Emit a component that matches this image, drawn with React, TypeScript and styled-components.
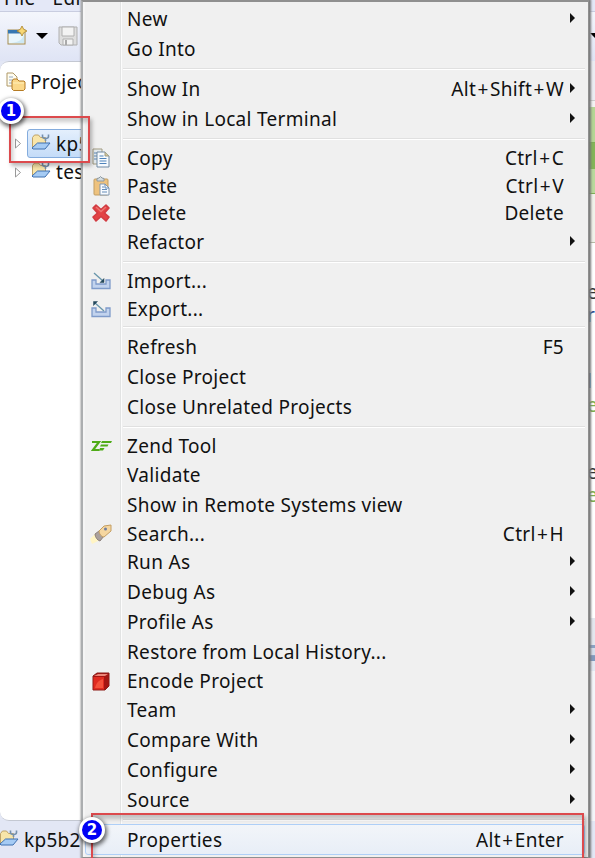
import React from "react";
import styled, { createGlobalStyle } from "styled-components";

const Global = createGlobalStyle`
  * { box-sizing: border-box; }
  html, body { margin: 0; padding: 0; }
  body { font-family: "Noto Sans", "Open Sans", sans-serif; font-size: 19px; letter-spacing: 0.3px; color: #111; overflow: hidden; }
`;

const Screen = styled.div`
  position: relative;
  width: 595px;
  height: 858px;
  overflow: hidden;
  background: #e3e7f5;
  display: flex;
  flex-direction: column;
`;

const MenuBar = styled.div`
  height: 12px;
  border-bottom: 1px solid #c9cde0;
  background: #e4e8f7;
  display: flex;
  align-items: flex-end;
  gap: 17px;
  padding-left: 4px;
  line-height: 26px;
  flex: none;
  overflow: hidden;
`;

const Toolbar = styled.div`
  height: 49px;
  flex: none;
  display: flex;
  align-items: center;
  padding: 0 0 2px 7px;
  background: linear-gradient(#f4f6fc, #dfe4f5);
`;

const Caret = styled.span`
  border: 6px solid transparent;
  border-top-color: #000;
  border-bottom: 0;
  margin: 0 10px 0 9px;
`;

const EndCaret = styled(Caret)`
  margin: 0 -7px 0 auto;
`;

const Body = styled.div`
  display: flex;
  justify-content: space-between;
  height: 760px;
  flex: none;
`;

const Explorer = styled.div`
  width: 300px;
  background: #fff;
  border: 1px solid #c4c8d2;
  border-radius: 9px;
  border-left: 0;
`;

const Tab = styled.div`
  display: flex;
  align-items: center;
  height: 39px;
  gap: 4px;
  padding-left: 6px;
  margin-bottom: 28px;
  white-space: nowrap;
`;

const TreeRow = styled.div<{ $selected?: boolean }>`
  display: flex;
  align-items: center;
  height: 29px;
  padding-left: 14px;
  svg {
    flex: none;
  }
`;

const TreeLabel = styled.span<{ $selected?: boolean }>`
  display: flex;
  align-items: center;
  gap: 5px;
  height: 29px;
  width: 120px;
  margin-left: 5px;
  padding-left: 3px;
  padding-bottom: ${(p) => (p.$selected ? 0 : 2)}px;
  border: 1px solid ${(p) => (p.$selected ? "#84acdd" : "transparent")};
  border-radius: 3px;
  background: ${(p) => (p.$selected ? "linear-gradient(#e4effc, #c4dcf8)" : "none")};
  svg {
    margin-top: -4px;
  }
`;

const Editor = styled.div`
  width: 8px;
  display: flex;
  flex-direction: column;
  background: #fff;
  overflow: hidden;
`;

const Band = styled.div<{ $h: number; $bg: string; $line?: string }>`
  height: ${(p) => p.$h}px;
  flex: none;
  background: ${(p) => p.$bg};
  border-bottom: ${(p) => (p.$line ? `1px solid ${p.$line}` : "0")};
`;

const Code = styled.div<{ $h: number; $c: string }>`
  height: ${(p) => p.$h}px;
  flex: none;
  line-height: 23px;
  color: ${(p) => p.$c};
`;

const Status = styled.div`
  display: flex;
  align-items: center;
  height: 37px;
  flex: none;
  gap: 5px;
  margin-left: -1px;
  svg {
    margin-top: -4px;
  }
`;

const Menu = styled.div`
  position: absolute;
  left: 81px;
  top: 0;
  width: 508px;
  height: 858px;
  padding: 1px 2px 0 1px;
  border: 1px solid #8f8f8f;
  border-top-width: 2px;
  border-left: 2px solid #acaeb0;
  box-shadow: 1px 0 2px 1px #777;
  background: linear-gradient(90deg, #f5f5f5 2px, #f0f0f0 2px, #f0f0f0 37px, #e2e3e3 37px, #e2e3e3 38px, #fcfcfc 38px, #fcfcfc 39px, #f0f0f0 39px);
`;

const Item = styled.div<{ $h: number; $hot?: boolean }>`
  height: ${(p) => p.$h}px;
  display: grid;
  grid-template-columns: 37px 1fr auto ${(p) => (p.$hot ? 20 : 22)}px;
  align-items: center;
  border: ${(p) => (p.$hot ? "1px solid #aecff7" : "0 solid")};
  border-radius: 3px;
  background: ${(p) => (p.$hot ? "linear-gradient(#f2f5f9, #e8eef7)" : "none")};
  margin: 0 ${(p) => (p.$hot ? "1px" : "0")};
  padding-left: ${(p) => (p.$hot ? "0" : "2px")};
`;

const IconCell = styled.span`
  display: flex;
  width: 30px;
  justify-content: center;
`;

const Label = styled.span`
  padding-left: 4px;
  white-space: nowrap;
  line-height: 24px;
`;

const Plus = styled.span`
  padding: 0 1.4px;
`;

const Arrow = styled.span`
  border: 5px solid transparent;
  border-left: 5px solid #111;
  border-right: 0;
  width: 0;
  margin: -2px 0 0 6px;
`;

const Sep = styled.div<{ $h: number }>`
  height: ${(p) => p.$h}px;
  padding: 4px 1px 0 39px;
  &::before {
    content: "";
    display: block;
    height: 2px;
    background: linear-gradient(#e0e0e0 50%, #fff 50%);
  }
`;

const Frame = styled.div<{ $x: number; $y: number; $w: number; $h: number }>`
  position: absolute;
  left: ${(p) => p.$x}px;
  top: ${(p) => p.$y}px;
  width: ${(p) => p.$w}px;
  height: ${(p) => p.$h}px;
  border: 2px solid #dc4a4d;
  box-shadow: 2px 3px 4px rgba(0, 0, 0, 0.28), inset 2px 4px 4px rgba(0, 0, 0, 0.2);
`;

const Badge = styled.div<{ $x: number; $y: number }>`
  position: absolute;
  left: ${(p) => p.$x}px;
  top: ${(p) => p.$y}px;
  width: 26px;
  height: 26px;
  border: 3px solid #fff;
  border-radius: 50%;
  background: #0000f5;
  color: #fff;
  font: bold 15px/20px "DejaVu Sans", sans-serif;
  letter-spacing: 0;
  text-align: center;
  box-shadow: 1px 2px 4px 1px rgba(0, 0, 0, 0.6);
`;

const FolderIcon = () => (
  <svg width="20" height="18" viewBox="0 0 20 18">
    <path d="M1.500 14V4.500L3.500 2h4l2 2.500h5V10" fill="#f8e5a9" stroke="#bfa368" />
    <path d="M14.500 8V5.500M11.500 1.500v2q0 2 3 2t3-2v-2" fill="none" stroke="#7590ad" strokeWidth="1.600" />
    <path d="M1 15l5.500-5H19l-5 6H2z" fill="#a5cbf4" stroke="#3f70b0" strokeLinejoin="round" />
  </svg>
);

const NewIcon = () => (
  <svg width="20" height="20" viewBox="0 0 20 20">
    <rect x="1" y="4" width="17" height="14" fill="#e9f6fc" stroke="#a58b4e" />
    <path d="M1 4h13v3.500H1z" fill="#3577b2" />
    <path d="M2 17C9 17 15 15 17 9v8z" fill="#cde8f4" />
    <path d="M15 0l1.700 3.300L20 5l-3.300 1.700L15 10l-1.700-3.300L10 5l3.300-1.700z" fill="#f9d875" stroke="#a98129" strokeWidth=".8" />
  </svg>
);

const SaveIcon = () => (
  <svg width="20" height="20" viewBox="0 0 20 20">
    <path d="M1 1h18v18H3l-2-2z" fill="#dedede" stroke="#b0b0b0" />
    <path d="M4 1h12v9H4zM5 13h10v6H5z" fill="#f3f3f3" stroke="#b0b0b0" />
    <path d="M7 14h2v5H7z" fill="#aaa" />
  </svg>
);

const ExplorerIcon = () => (
  <svg width="20" height="20" viewBox="0 0 20 20">
    <path d="M1 1h6l4 4v9H1z" fill="#fffdf1" stroke="#af9866" />
    <path d="M3 5h4M3 8h5M3 11h3" stroke="#93a8c3" />
    <path d="M6 17V9l1.500-2H11l2 2h5l1 1v7l-1.500 1.500h-10z" fill="#fbd88a" stroke="#b57b24" />
    <path d="M7 11h11" stroke="#fff0ba" />
  </svg>
);

const TreeArrow = () => (
  <svg width="8" height="11" viewBox="0 0 8 11">
    <path d="M1.500 1v9L6.500 5.500z" fill="#fff" stroke="#999" />
  </svg>
);

const CopyIcon = () => (
  <svg width="20" height="20" viewBox="0 0 20 20">
    <path d="M2 1h9v15H2z" fill="#e5ebef" stroke="#a29b80" />
    <path d="M3 5h3M3 8h3M3 11h3" stroke="#5d88b8" />
    <path d="M6 4h8l4 4v11H6z" fill="#f6fafe" stroke="#718aa3" />
    <path d="M14 4v4h4" fill="#d9c893" stroke="#9c9b88" />
    <path d="M8.500 8h4M8.500 10.500h7M8.500 13h7M8.500 15.500h7" stroke="#4f83ba" />
  </svg>
);

const PasteIcon = () => (
  <svg width="20" height="20" viewBox="0 0 20 20">
    <rect x="3" y="3" width="14" height="16" rx="1" fill="#eec27e" stroke="#c19d62" />
    <path d="M6 5V2.500l2-.5 1.500-1.500L11 2l2 .5V5z" fill="#d4dce0" stroke="#8c98a0" />
    <path d="M9 8h5l4 4v7H9z" fill="#f8fbff" stroke="#8298b0" />
    <path d="M14 8v4h4M11 11h2M11 13.500h5M11 16h5" fill="none" stroke="#648cb8" />
  </svg>
);

const DeleteIcon = () => (
  <svg width="20" height="20" viewBox="0 0 20 20">
    <path d="M5 2l5 4.500L15 2l3 3-4.500 5 4.500 4-3 4-5-4.500L5 18l-3-4 4.500-4L2 5z" fill="#e34345" stroke="#d23c42" strokeWidth="1.600" strokeLinejoin="round" />
    <path d="M5 4l5 4.500L15 4" fill="none" stroke="#ee7672" strokeWidth="1.500" />
  </svg>
);

const TrayIcon = ({ out }: { out?: boolean }) => (
  <svg width="20" height="18" viewBox="0 0 20 18">
    <path d="M1 8h4v4h10V8h4v8.500H1z" fill="#c2d3ee" stroke="#7f9bca" strokeWidth="1.300" />
    <path d={out ? "M4 3l9 8" : "M3 1l9 8"} stroke="#6795aa" strokeWidth="1.300" />
    <path d={out ? "M2.500 1.500h4l-4 4z" : "M9 10.500h4v-4z"} fill="#24485c" stroke="#24485c" strokeWidth=".5" />
  </svg>
);

const ZendIcon = () => (
  <svg width="21" height="12" viewBox="0 0 21 12">
    <path d="M1 2h7L2 10h6.500" fill="none" stroke="#4fab18" strokeWidth="2.200" />
    <path d="M11 1h10l-1 2H10zM10 4.500h7.500l-1 2H9zM9 8h4.500l-1.500 2.500H8z" fill="#4fab18" />
  </svg>
);

const SearchIcon = () => (
  <svg width="22" height="20" viewBox="0 0 22 20">
    <path d="M0 15l5-5 5 6-8 4z" fill="#fff4c4" />
    <path d="M5 10l4-3 5 5-4 5c-2.500-.5-5-4-5-7z" fill="#aaa09c" stroke="#8d817c" />
    <path d="M9 7l5-5 7-1v6l-7 6c-2 0-5-3-5-6z" fill="#f5d6a0" stroke="#c49e62" />
    <circle cx="15.500" cy="5" r="1.500" fill="#6e7da0" />
  </svg>
);

const CubeIcon = () => (
  <svg width="18" height="19" viewBox="0 0 18 19">
    <path d="M1 4l4-3h12v13l-4 4H1z" fill="#a51512" stroke="#8b1c19" strokeLinejoin="round" />
    <path d="M1.500 5H12v12.500H1.500z" fill="#e02a20" />
    <path d="M2 4l4-2h10l-3 2z" fill="#ec8578" />
    <path d="M3 16c1-5 4-8 8-9v9z" fill="#f4503a" />
  </svg>
);

const Shortcut = ({ keys }: { keys: string }) => (
  <Label>
    {keys.split("+").map((part, i) => (
      <React.Fragment key={i}>
        {i > 0 && <Plus>+</Plus>}
        {part}
      </React.Fragment>
    ))}
  </Label>
);

type Entry = { h: number; label?: string; keys?: string; sub?: boolean; icon?: React.ReactNode; hot?: boolean };

const entries: Entry[] = [
  { h: 31, label: "New", sub: true },
  { h: 30, label: "Go Into" },
  { h: 10 },
  { h: 30, label: "Show In", keys: "Alt+Shift+W", sub: true },
  { h: 30, label: "Show in Local Terminal", sub: true },
  { h: 10 },
  { h: 28, label: "Copy", keys: "Ctrl+C", icon: <CopyIcon /> },
  { h: 27, label: "Paste", keys: "Ctrl+V", icon: <PasteIcon /> },
  { h: 28, label: "Delete", keys: "Delete", icon: <DeleteIcon /> },
  { h: 30, label: "Refactor", sub: true },
  { h: 10 },
  { h: 28, label: "Import...", icon: <TrayIcon /> },
  { h: 27, label: "Export...", icon: <TrayIcon out /> },
  { h: 10 },
  { h: 30, label: "Refresh", keys: "F5" },
  { h: 30, label: "Close Project" },
  { h: 30, label: "Close Unrelated Projects" },
  { h: 10 },
  { h: 28, label: "Zend Tool", icon: <ZendIcon /> },
  { h: 30, label: "Validate" },
  { h: 30, label: "Show in Remote Systems view" },
  { h: 27, label: "Search...", keys: "Ctrl+H", icon: <SearchIcon /> },
  { h: 30, label: "Run As", sub: true },
  { h: 30, label: "Debug As", sub: true },
  { h: 30, label: "Profile As", sub: true },
  { h: 30, label: "Restore from Local History..." },
  { h: 28, label: "Encode Project", icon: <CubeIcon /> },
  { h: 30, label: "Team", sub: true },
  { h: 30, label: "Compare With", sub: true },
  { h: 30, label: "Configure", sub: true },
  { h: 30, label: "Source", sub: true },
  { h: 9 },
  { h: 31, label: "Properties", keys: "Alt+Enter", hot: true },
];

export default function App() {
  return (
    <Screen>
      <Global />
      <MenuBar><span>File</span><span>Edit</span></MenuBar>
      <Toolbar><NewIcon /><Caret /><SaveIcon /><EndCaret /></Toolbar>
      <Body>
        <Explorer>
          <Tab><ExplorerIcon />Projec</Tab>
          <TreeRow><TreeArrow /><TreeLabel $selected><FolderIcon />kp5</TreeLabel></TreeRow>
          <TreeRow><TreeArrow /><TreeLabel><FolderIcon />tes</TreeLabel></TreeRow>
        </Explorer>
        <Editor>
          <Band $h={40} $bg="#ebecf2" $line="#cccccc" />
          <Band $h={6} $bg="#f3f3f3" />
          <Band $h={36} $bg="#b5d694" $line="#7fae55" />
          <Band $h={26} $bg="#84b558" />
          <Band $h={25} $bg="#b9d99c" $line="#7fae55" />
          <Band $h={49} $bg="#f0f2ea" $line="#b5bba5" />
          <Band $h={38} $bg="#fff" />
          <Code $h={23} $c="#333">e</Code>
          <Code $h={66} $c="#2c4d94">r</Code>
          <Code $h={24} $c="#222a66">l</Code>
          <Code $h={67} $c="#7dad4c">e</Code>
          <Code $h={23} $c="#333">e</Code>
          <Code $h={134} $c="#7dad4c">e</Code>
          <Band $h={27} $bg="#e3e7ee" />
          <Band $h={3} $bg="#8ba3c4" />
          <Band $h={8} $bg="#d5deeb" $line="#8ba3c4" />
          <Band $h={5} $bg="#8199bd" />
          <Band $h={10} $bg="#e3e8f2" />
          <Band $h={150} $bg="#f4f5f9" />
        </Editor>
      </Body>
      <Status><FolderIcon />kp5b2</Status>
      <Menu>
        {entries.map((e, i) =>
          e.label ? (
            <Item key={i} $h={e.h} $hot={e.hot}>
              <IconCell>{e.icon}</IconCell>
              <Label>{e.label}</Label>
              {e.keys ? <Shortcut keys={e.keys} /> : <span />}
              {e.sub ? <Arrow /> : <span />}
            </Item>
          ) : (
            <Sep key={i} $h={e.h} />
          )
        )}
      </Menu>
      <Frame $x={9} $y={116} $w={81} $h={47} />
      <Frame $x={91} $y={813} $w={493} $h={60} />
      <Badge $x={-2} $y={98}>1</Badge>
      <Badge $x={79} $y={817}>2</Badge>
    </Screen>
  );
}
